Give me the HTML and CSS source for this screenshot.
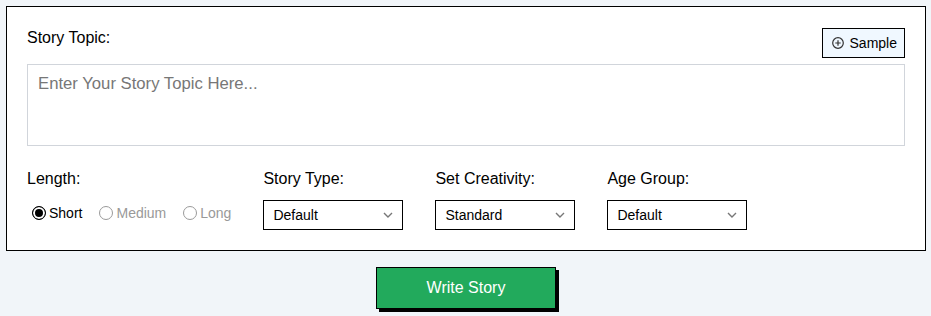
FILE: index.html
```html
<!DOCTYPE html>
<html lang="en">
<head>
    <meta charset="UTF-8">
    <meta name="viewport" content="width=device-width, initial-scale=1.0">
    <title>Story Writer</title>
    <link rel="stylesheet" href="styles.css">
</head>
<body>
    <div class="page">
        <div class="card">
            <div class="topic-head">
                <label class="field-label" for="storyTopic">Story Topic:</label>
                <button class="sample-btn" type="button">
                    <svg width="12" height="12" viewBox="0 0 12 12">
                        <circle cx="6" cy="6" r="5.3" fill="none" stroke="#333" stroke-width="1.2"/>
                        <path d="M6 3.3v5.4M3.3 6h5.4" stroke="#333" stroke-width="1.2"/>
                    </svg>
                    Sample
                </button>
            </div>
            <textarea id="storyTopic" class="topic-input" placeholder="Enter Your Story Topic Here..."></textarea>

            <div class="options-row">
                <div class="field length-field">
                    <span class="field-label">Length:</span>
                    <div class="radio-group">
                        <label class="radio-option active">
                            <input type="radio" name="length" checked>
                            Short
                        </label>
                        <label class="radio-option">
                            <input type="radio" name="length">
                            Medium
                        </label>
                        <label class="radio-option">
                            <input type="radio" name="length">
                            Long
                        </label>
                    </div>
                </div>

                <div class="field">
                    <label class="field-label" for="storyType">Story Type:</label>
                    <div class="select-wrap">
                        <select id="storyType">
                            <option>Default</option>
                            <option>Adventure</option>
                            <option>Fantasy</option>
                        </select>
                        <span class="chevron">
                            <svg width="10" height="6" viewBox="0 0 10 6"><path d="M1 1l4 4 4-4" fill="none" stroke="#777" stroke-width="1.4"/></svg>
                        </span>
                    </div>
                </div>

                <div class="field">
                    <label class="field-label" for="creativity">Set Creativity:</label>
                    <div class="select-wrap">
                        <select id="creativity">
                            <option>Standard</option>
                            <option>High</option>
                            <option>Low</option>
                        </select>
                        <span class="chevron">
                            <svg width="10" height="6" viewBox="0 0 10 6"><path d="M1 1l4 4 4-4" fill="none" stroke="#777" stroke-width="1.4"/></svg>
                        </span>
                    </div>
                </div>

                <div class="field">
                    <label class="field-label" for="ageGroup">Age Group:</label>
                    <div class="select-wrap">
                        <select id="ageGroup">
                            <option>Default</option>
                            <option>Kids</option>
                            <option>Teens</option>
                        </select>
                        <span class="chevron">
                            <svg width="10" height="6" viewBox="0 0 10 6"><path d="M1 1l4 4 4-4" fill="none" stroke="#777" stroke-width="1.4"/></svg>
                        </span>
                    </div>
                </div>
            </div>
        </div>

        <div class="actions">
            <button class="write-btn" type="button">Write Story</button>
        </div>
    </div>
</body>
</html>
```

FILE: styles.css
```css
* {
    margin: 0;
    padding: 0;
    box-sizing: border-box;
}

body {
    font-family: "Liberation Sans", Arial, sans-serif;
    background: #f1f5f9;
    color: #000;
}

.page {
    padding: 6px 5px 6px 6px;
}

.card {
    background: #fff;
    border: 1px solid #000;
    padding: 21px 20px 20px;
}

.topic-head {
    display: flex;
    justify-content: space-between;
    align-items: flex-start;
}

.field-label {
    display: block;
    font-size: 16px;
    line-height: 20px;
}

.sample-btn {
    display: flex;
    align-items: center;
    gap: 6px;
    height: 30px;
    padding: 0 7px 0 9px;
    background: #f0f8ff;
    border: 1px solid #000;
    font-family: inherit;
    font-size: 14px;
    color: #000;
    cursor: pointer;
}

.topic-input {
    display: block;
    width: 100%;
    height: 82px;
    margin-top: 6px;
    padding: 9px 10px;
    border: 1px solid #d1d5db;
    font-family: inherit;
    font-size: 16.7px;
    resize: none;
    outline: none;
}

.topic-input::placeholder {
    color: #777;
}

.options-row {
    display: flex;
    gap: 32px;
    margin-top: 24px;
}

.options-row .field-label {
    line-height: 18px;
    margin-bottom: 12px;
}

.length-field {
    min-width: 204px;
}

.radio-group {
    display: flex;
    align-items: center;
    height: 26px;
}

.radio-option {
    display: flex;
    align-items: center;
    gap: 3px;
    margin-right: 12px;
    font-size: 14px;
    color: #999;
    cursor: pointer;
}

.radio-option:last-child {
    margin-right: 0;
}

.radio-option.active {
    color: #000;
}

.radio-option input {
    appearance: none;
    width: 14px;
    height: 14px;
    margin-left: 5px;
    border: 1px solid #9a9a9a;
    border-radius: 50%;
    background: #fff;
}

.radio-option input:checked {
    border: 1.5px solid #000;
    background: #000;
    box-shadow: inset 0 0 0 2px #fff;
}

.select-wrap {
    position: relative;
    width: 140px;
}

.select-wrap select {
    appearance: none;
    width: 100%;
    height: 30px;
    padding: 0 9px;
    border: 1px solid #000;
    border-radius: 0;
    background: #fff;
    font-family: inherit;
    font-size: 14px;
    color: #000;
    outline: none;
}

.chevron {
    position: absolute;
    right: 10px;
    top: 12px;
    display: flex;
    pointer-events: none;
}

.actions {
    display: flex;
    justify-content: center;
    margin-top: 16px;
}

.write-btn {
    width: 180px;
    height: 42px;
    background: #22aa5c;
    border: 1px solid #000;
    box-shadow: 3px 3px 0 #000;
    color: #fff;
    font-family: inherit;
    font-size: 16px;
    cursor: pointer;
}
```
